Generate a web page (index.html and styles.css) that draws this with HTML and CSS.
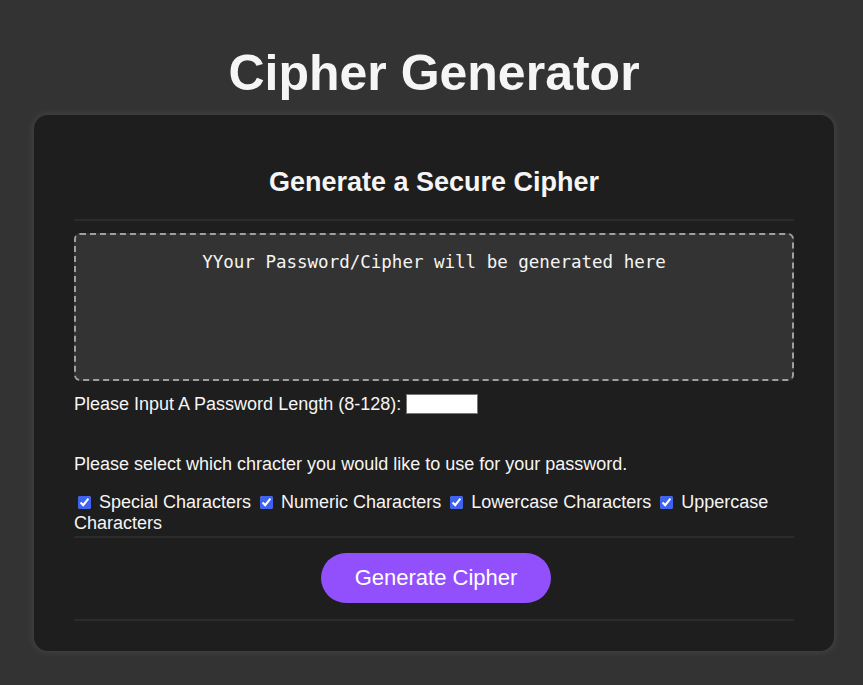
FILE: index.html
```html
<!DOCTYPE html>
<html>
<head>
<meta charset="utf-8">
<title>Cipher Generator</title>
<link rel="stylesheet" href="styles.css">
</head>
<body>
<h1 class="title">Cipher Generator</h1>
<div class="card">
  <div class="card-header">
    <h2>Generate a Secure Cipher</h2>
  </div>
  <div class="card-body">
    <textarea class="output" readonly placeholder="YYour Password/Cipher will be generated here"></textarea>
    <div class="length-row">
      <label for="len">Please Input A Password Length (8-128):</label>
      <input id="len" class="len-input" type="text">
    </div>
    <p class="select-text">Please select which chracter you would like to use for your password.</p>
    <div class="options">
      <label class="opt"><input type="checkbox" checked> Special Characters</label>
      <label class="opt"><input type="checkbox" checked> Numeric Characters</label>
      <label class="opt"><input type="checkbox" checked> Lowercase Characters</label>
      <label class="opt"><input type="checkbox" checked> Uppercase Characters</label>
    </div>
  </div>
  <div class="card-footer">
    <button class="btn">Generate Cipher</button>
  </div>
</div>
</body>
</html>
```
FILE: styles.css
```css
html, body {
  margin: 0;
  padding: 0;
}
body {
  background: #333333;
  color: #f5f5f5;
  font-family: "Liberation Sans", Arial, sans-serif;
  font-size: 18px;
  padding: 0 0 34px 5px;
}
.title {
  margin: 0;
  padding-top: 44px;
  text-align: center;
  font-size: 50px;
  line-height: 58px;
  font-weight: bold;
  color: #f5f5f5;
}
.card {
  width: 800px;
  margin: 13px auto 0;
  background: #1e1e1e;
  border-radius: 14px;
  box-shadow: 0 0 6px 2px rgba(255, 255, 255, 0.07);
  padding: 0 40px 30px;
  box-sizing: border-box;
}
.card-header {
  border-bottom: 2px solid #2b2b2b;
  padding: 52px 0 21px;
  text-align: center;
}
.card-header h2 {
  margin: 0;
  font-size: 27px;
  line-height: 31px;
  font-weight: bold;
  color: #f5f5f5;
}
.card-body {
  padding-top: 12px;
  padding-bottom: 2px;
  border-bottom: 2px solid #2b2b2b;
}
.output {
  display: block;
  width: 100%;
  height: 148px;
  box-sizing: border-box;
  background: #333333;
  border: 2px dashed #a0a0a0;
  border-radius: 6px;
  resize: none;
  text-align: center;
  font-family: "DejaVu Sans Mono", monospace;
  font-size: 17.5px;
  padding: 17px 10px 15px;
  color: #f5f5f5;
}
.output::placeholder {
  color: #f5f5f5;
  opacity: 1;
}
.length-row {
  margin-top: 12px;
  height: 22px;
  display: flex;
  align-items: center;
  gap: 5px;
}
.len-input {
  width: 72px;
  height: 20px;
  box-sizing: border-box;
  border: 1px solid #767676;
  background: #fff;
  padding: 0;
}
.select-text {
  margin: 39px 0 0;
  line-height: 21px;
}
.options {
  margin-top: 17px;
  line-height: 21px;
}
.options input {
  margin: 3px 3px 3px 4px;
  vertical-align: -1px;
  accent-color: #3f63f0;
}
.card-footer {
  padding-top: 15px;
  padding-bottom: 16px;
  border-bottom: 2px solid #2b2b2b;
  text-align: center;
}
.btn {
  display: inline-block;
  vertical-align: top;
  margin-left: 4px;
  width: 230px;
  height: 50px;
  border: none;
  border-radius: 25px;
  background: #9150fc;
  color: #fff;
  font-family: "Liberation Sans", Arial, sans-serif;
  font-size: 22px;
}
```
